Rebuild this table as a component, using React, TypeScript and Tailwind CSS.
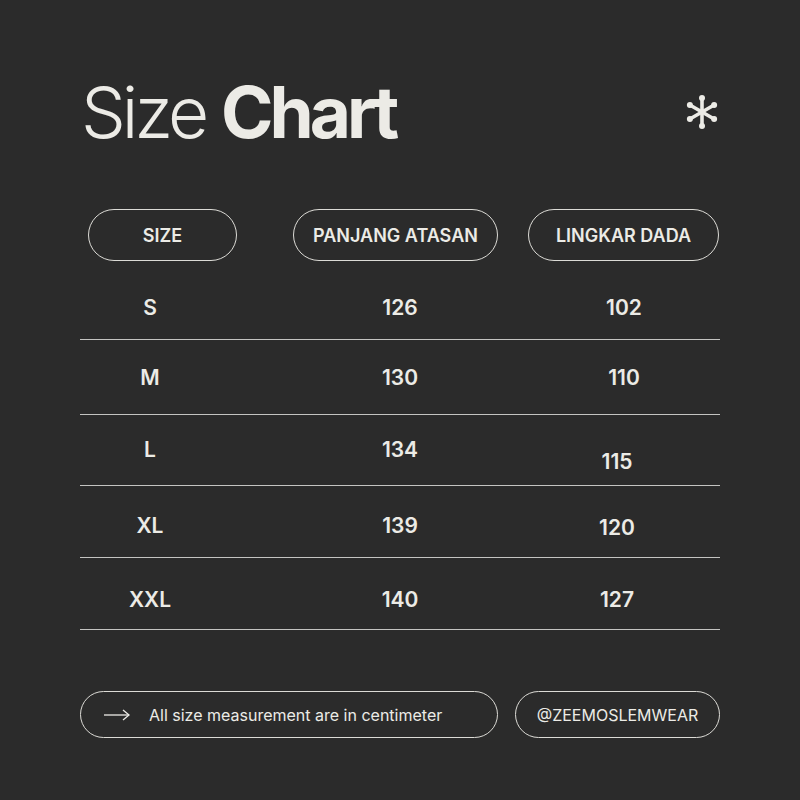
const rows = [
  { size: "S", panjang: "126", lingkar: "102", rowCls: "h-[64px] mt-[15px]", lingkarCls: "translate-x-[7px]" },
  { size: "M", panjang: "130", lingkar: "110", rowCls: "h-[75px] pt-[2px]", lingkarCls: "translate-x-[7px]" },
  { size: "L", panjang: "134", lingkar: "115", rowCls: "h-[71px]", lingkarCls: "translate-y-[12px]" },
  { size: "XL", panjang: "139", lingkar: "120", rowCls: "h-[72px] pt-[8px]", lingkarCls: "translate-y-[2px]" },
  { size: "XXL", panjang: "140", lingkar: "127", rowCls: "h-[72px] pt-[12px]", lingkarCls: "" },
];

function Asterisk() {
  return (
    <svg width="40" height="40" viewBox="-20 -20 40 40" className="text-[#ecebe6]">
      {[90, 30, -30].map((a) => {
        const r = (a * Math.PI) / 180;
        const x = Math.cos(r) * 14;
        const y = Math.sin(r) * 14;
        return (
          <g key={a}>
            <line x1={-x} y1={-y} x2={x} y2={y} stroke="currentColor" strokeWidth="3.6" strokeLinecap="round" />
            <circle cx={x} cy={y} r="3" fill="currentColor" />
            <circle cx={-x} cy={-y} r="3" fill="currentColor" />
          </g>
        );
      })}
    </svg>
  );
}

export default function App() {
  return (
    <div className="w-[800px] h-[800px] bg-[#2b2b2b] px-20 text-[#ecebe6] font-['Inter',sans-serif]">
      {/* title */}
      <div className="flex items-center justify-between pt-[77px]">
        <h1 className="text-[71px] leading-none tracking-[-4px] ml-[1px]">
          <span className="font-light">Size </span>
          <span className="font-bold">Chart</span>
        </h1>
        <div className="mr-[-2px] mt-[-2px]">
          <Asterisk />
        </div>
      </div>

      {/* header pills */}
      <div className="flex mt-[61px] text-[18px] font-semibold">
        <div className="ml-[8px] w-[149px] h-[52px] rounded-full border-[1.5px] border-[#dcdbd6] flex items-center justify-center">
          SIZE
        </div>
        <div className="ml-[56px] w-[205px] h-[52px] rounded-full border-[1.5px] border-[#dcdbd6] flex items-center justify-center">
          PANJANG ATASAN
        </div>
        <div className="ml-[30px] w-[191px] h-[52px] rounded-full border-[1.5px] border-[#dcdbd6] flex items-center justify-center">
          LINGKAR DADA
        </div>
      </div>

      {/* data rows */}
      <div className="text-[21px] font-semibold">
        {rows.map((r) => (
          <div key={r.size} className={`flex items-center border-b border-[#c4c4c2] ${r.rowCls}`}>
            <div className="w-[140px] text-center">{r.size}</div>
            <div className="ml-[110px] w-[140px] text-center">{r.panjang}</div>
            <div className="ml-[67px] w-[160px] text-center">
              <span className={`inline-block ${r.lingkarCls}`}>{r.lingkar}</span>
            </div>
          </div>
        ))}
      </div>

      {/* footer */}
      <div className="flex mt-[61px] text-[16px]">
        <div className="w-[418px] h-[47px] rounded-full border-[1.5px] border-[#dcdbd6] flex items-center pl-[22px]">
          <svg width="28" height="12" viewBox="0 0 28 12" fill="none">
            <line x1="1" y1="6" x2="26" y2="6" stroke="#ecebe6" strokeWidth="1.3" />
            <path d="M20 1 L26 6 L20 11" stroke="#ecebe6" strokeWidth="1.3" />
          </svg>
          <span className="ml-[18px]">All size measurement are in centimeter</span>
        </div>
        <div className="ml-[17px] w-[205px] h-[47px] rounded-full border-[1.5px] border-[#dcdbd6] flex items-center justify-center">
          @ZEEMOSLEMWEAR
        </div>
      </div>
    </div>
  );
}
